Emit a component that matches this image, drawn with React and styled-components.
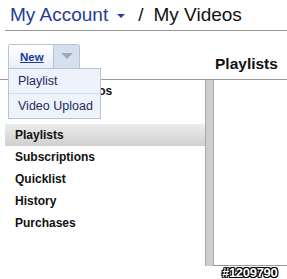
import styled, { createGlobalStyle } from 'styled-components';

const Global = createGlobalStyle`
  body {
    margin: 0;
    background: #fff;
    font-family: 'Liberation Sans', Arial, sans-serif;
  }
`;

const Page = styled.div`
  position: relative;
  width: 287px;
  height: 279px;
  overflow: hidden;
  background: #fff;
`;

const Header = styled.div`
  display: flex;
  align-items: center;
  height: 30px;
  margin-left: 5px;
  padding-left: 5px;
  border-bottom: 1px solid #999;
  font-size: 19px;
  color: #111;
`;

const AccountLink = styled.span`
  color: #233b9c;
`;

const Caret = styled.span`
  display: inline-block;
  width: 0;
  height: 0;
  margin: 2px 13px 0 9px;
  border-left: 4px solid transparent;
  border-right: 4px solid transparent;
  border-top: 4px solid #233b9c;
`;

const Slash = styled.span`
  margin-right: 10px;
`;

const Toolbar = styled.div`
  position: relative;
  display: flex;
  height: 48px;
  border-bottom: 1px solid #999;
`;

const SplitButton = styled.div`
  display: flex;
  align-self: flex-start;
  margin: 13px 0 0 8px;
  height: 23px;
  border: 1px solid #b6c2d6;
  border-bottom: none;
  border-radius: 3px 3px 0 0;
  overflow: hidden;
`;

const NewLink = styled.span`
  display: flex;
  align-items: center;
  width: 45px;
  padding-left: 11px;
  box-sizing: border-box;
  font-size: 11.5px;
  font-weight: bold;
  color: #1a3aa0;
  text-decoration: underline;
  background: linear-gradient(#ffffff, #e9eef7);
  border-right: 1px solid #b6c2d6;
`;

const ArrowPart = styled.span`
  display: flex;
  justify-content: center;
  padding-top: 8px;
  width: 25px;
  background: #d6dfec;

  &::after {
    content: '';
    width: 0;
    height: 0;
    border-left: 6px solid transparent;
    border-right: 6px solid transparent;
    border-top: 6px solid #9eabbe;
  }
`;

const Menu = styled.div`
  position: absolute;
  top: 68px;
  left: 8px;
  width: 93px;
  background: #eef2fb;
  border: 1px solid #b6c2d6;
  box-sizing: border-box;
  z-index: 2;
`;

const MenuItem = styled.div`
  height: ${p => p.h}px;
  display: flex;
  align-items: center;
  padding-left: 9px;
  font-size: 12.5px;
  color: #1d2a5e;
  border-top: ${p => (p.first ? 'none' : '1px solid #d3dcec')};
`;

const Heading = styled.div`
  margin: 24px 0 0 auto;
  width: 72px;
  font-size: 15.5px;
  font-weight: bold;
  color: #111;
`;

const Main = styled.div`
  display: flex;
  height: 186px;
`;

const Nav = styled.div`
  width: 200px;
  margin-left: 5px;
`;

const NavItem = styled.div`
  height: 22px;
  display: flex;
  align-items: center;
  padding-left: 10px;
  font-size: 12px;
  font-weight: bold;
  color: #111;
  background: ${p => (p.active ? 'linear-gradient(#ececec, #cfcfcf)' : 'transparent')};
`;

const Divider = styled.div`
  width: 7px;
  background: #cdcdcd;
  border-left: 1px solid #aaa;
  border-right: 1px solid #aaa;
`;

const Content = styled.div`
  flex: 1;
  border-bottom: 1px solid #999;
`;

const Stamp = styled.div`
  position: absolute;
  left: 222px;
  top: 265px;
  font-size: 13px;
  font-weight: bold;
  color: #fff;
  letter-spacing: -0.3px;
  text-shadow: -1px 0 #000, 1px 0 #000, 0 -1px #000, 0 1px #000,
    -1px -1px #000, 1px 1px #000, -1px 1px #000, 1px -1px #000;
`;

const navItems = ['Uploaded Videos', 'Favorites', 'Playlists', 'Subscriptions', 'Quicklist', 'History', 'Purchases'];

export default function App() {
  return (
    <Page>
      <Global />
      <Header>
        <AccountLink>My Account</AccountLink>
        <Caret />
        <Slash>/</Slash>
        <span>My Videos</span>
      </Header>
      <Toolbar>
        <SplitButton>
          <NewLink>New</NewLink>
          <ArrowPart />
        </SplitButton>
        <Heading>Playlists</Heading>
      </Toolbar>
      <Menu>
        <MenuItem first h={24}>Playlist</MenuItem>
        <MenuItem h={24}>Video Upload</MenuItem>
      </Menu>
      <Main>
        <Nav>
          {navItems.map(item => (
            <NavItem key={item} active={item === 'Playlists'}>{item}</NavItem>
          ))}
        </Nav>
        <Divider />
        <Content />
      </Main>
      <Stamp>#1209790</Stamp>
    </Page>
  );
}
